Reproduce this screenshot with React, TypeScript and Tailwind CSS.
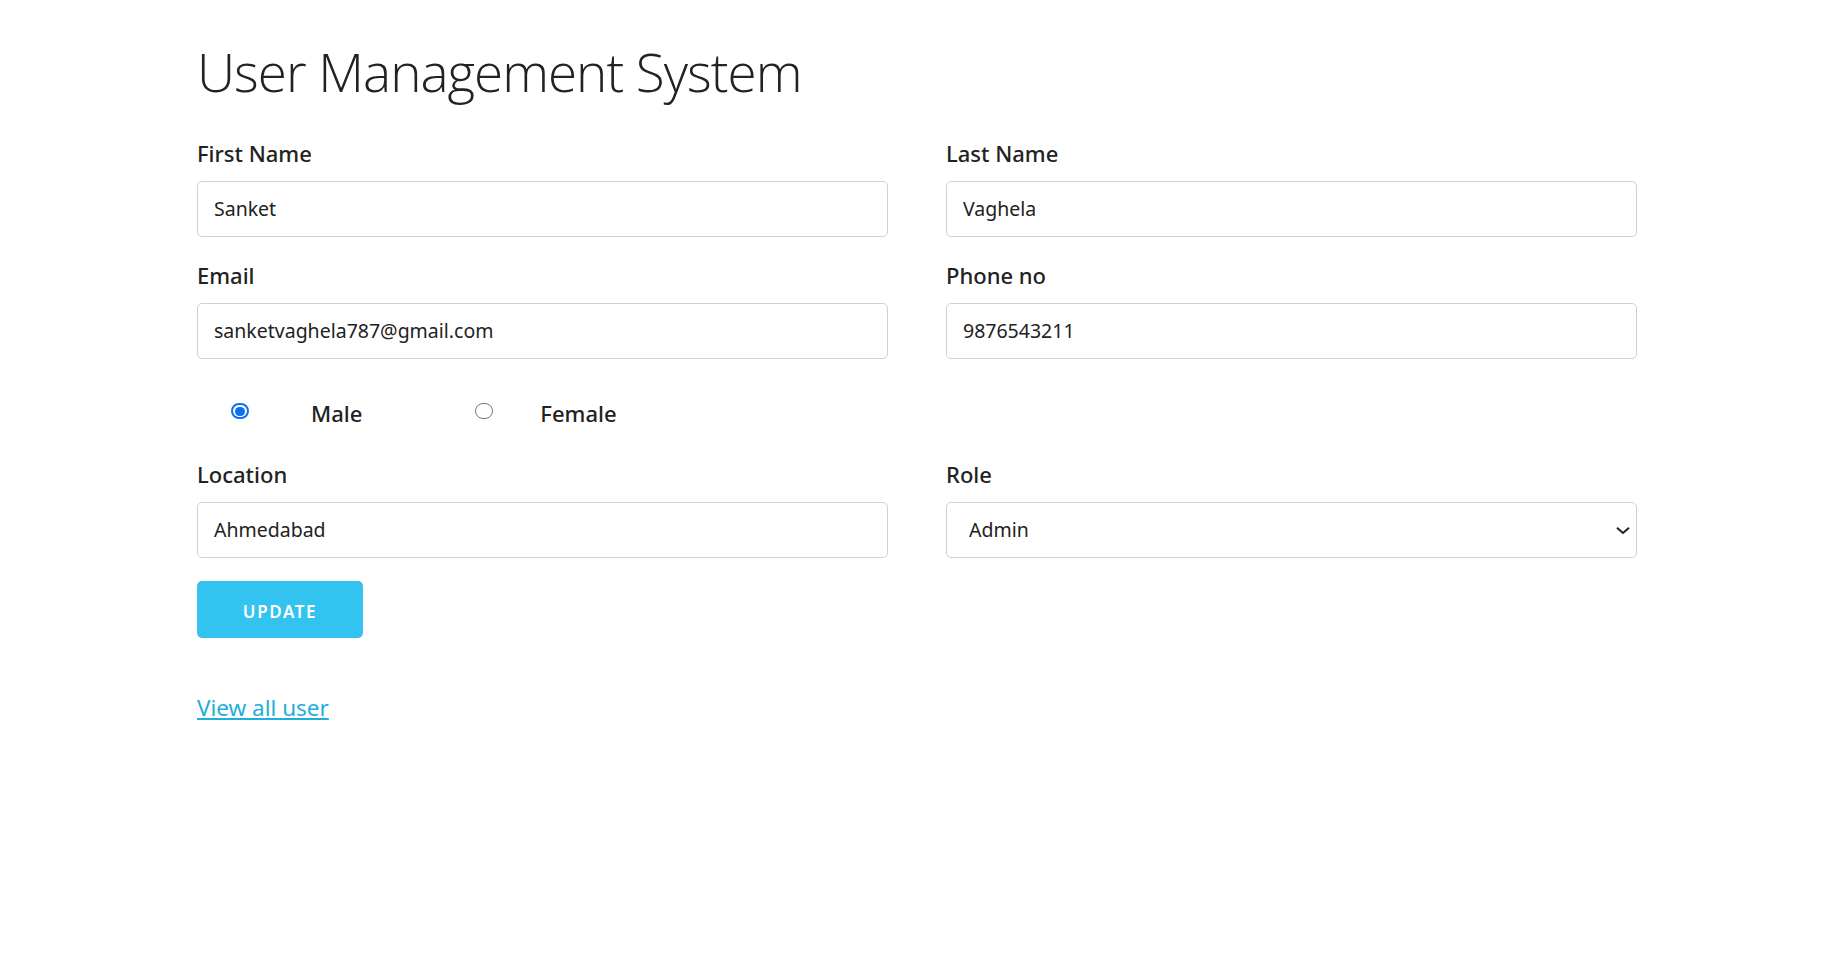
import { useState } from "react";

function Field({ label, value }: { label: string; value: string }) {
  return (
    <div className="flex flex-col">
      <label className="text-[22px] leading-[23px] font-medium text-[#222]">{label}</label>
      <input
        defaultValue={value}
        className="mt-[16px] h-[56px] w-full rounded-[5px] border border-[#d1d1d1] bg-white px-[16px] pb-[1px] text-[19.5px] text-[#222] outline-none focus:border-[#33c3f0]"
      />
    </div>
  );
}

function Radio({ checked }: { checked: boolean }) {
  return checked ? (
    <span className="flex h-[16px] w-[18px] items-center justify-center rounded-full border-[2px] border-[#0b72ef] bg-white">
      <span className="h-[9px] w-[10px] rounded-full bg-[#0b72ef]" />
    </span>
  ) : (
    <span className="h-[16px] w-[18px] rounded-full border border-[#767676] bg-white" />
  );
}

export default function App() {
  const [gender, setGender] = useState("male");

  return (
    <div className="min-h-screen bg-white font-['Noto_Sans',sans-serif] text-[#222]">
      <div className="mx-auto w-[1440px] pt-[40px]">
        <h1 className="font-['Open_Sans',sans-serif] text-[53px] leading-[64px] font-light tracking-[-1px] text-[#222]">
          User Management System
        </h1>

        <form className="mt-[38px]" onSubmit={(e) => e.preventDefault()}>
          <div className="grid grid-cols-2 gap-x-[58px] gap-y-[27px]">
            <Field label="First Name" value="Sanket" />
            <Field label="Last Name" value="Vaghela" />
            <Field label="Email" value="sanketvaghela787@gmail.com" />
            <Field label="Phone no" value="9876543211" />
          </div>

          {/* gender */}
          <div className="flex h-[104px] items-center">
            <button type="button" onClick={() => setGender("male")} className="ml-[34px] flex items-center">
              <Radio checked={gender === "male"} />
              <span className="ml-[62px] pt-[5px] text-[22px] font-medium text-[#222]">Male</span>
            </button>
            <button type="button" onClick={() => setGender("female")} className="ml-[113px] flex items-center">
              <Radio checked={gender === "female"} />
              <span className="ml-[47px] pt-[5px] text-[22px] font-medium text-[#222]">Female</span>
            </button>
          </div>

          <div className="grid grid-cols-2 gap-x-[58px]">
            <Field label="Location" value="Ahmedabad" />
            <div className="flex flex-col">
              <label className="text-[22px] leading-[23px] font-medium text-[#222]">Role</label>
              <div className="relative mt-[16px]">
                <select
                  defaultValue="Admin"
                  className="h-[56px] w-full appearance-none rounded-[5px] border border-[#d1d1d1] bg-white pl-[22px] text-[19.5px] text-[#222] outline-none"
                >
                  <option>Admin</option>
                  <option>User</option>
                </select>
                <svg
                  className="pointer-events-none absolute right-[7px] top-[25px] h-[7px] w-[14px]"
                  viewBox="0 0 14 7"
                  fill="none"
                  stroke="#222"
                  strokeWidth="2"
                >
                  <path d="M1 0.8 L7 6 L13 0.8" />
                </svg>
              </div>
            </div>
          </div>

          <button
            type="submit"
            className="mt-[23px] h-[57px] w-[166px] rounded-[5px] bg-[#33c3f0] pt-[4px] text-[17px] font-semibold uppercase tracking-[1.6px] text-white"
          >
            Update
          </button>
        </form>

        <a href="#" className="mt-[57px] inline-block text-[22.5px] leading-[26px] text-[#1eaedb] underline">
          View all user
        </a>
      </div>
    </div>
  );
}
